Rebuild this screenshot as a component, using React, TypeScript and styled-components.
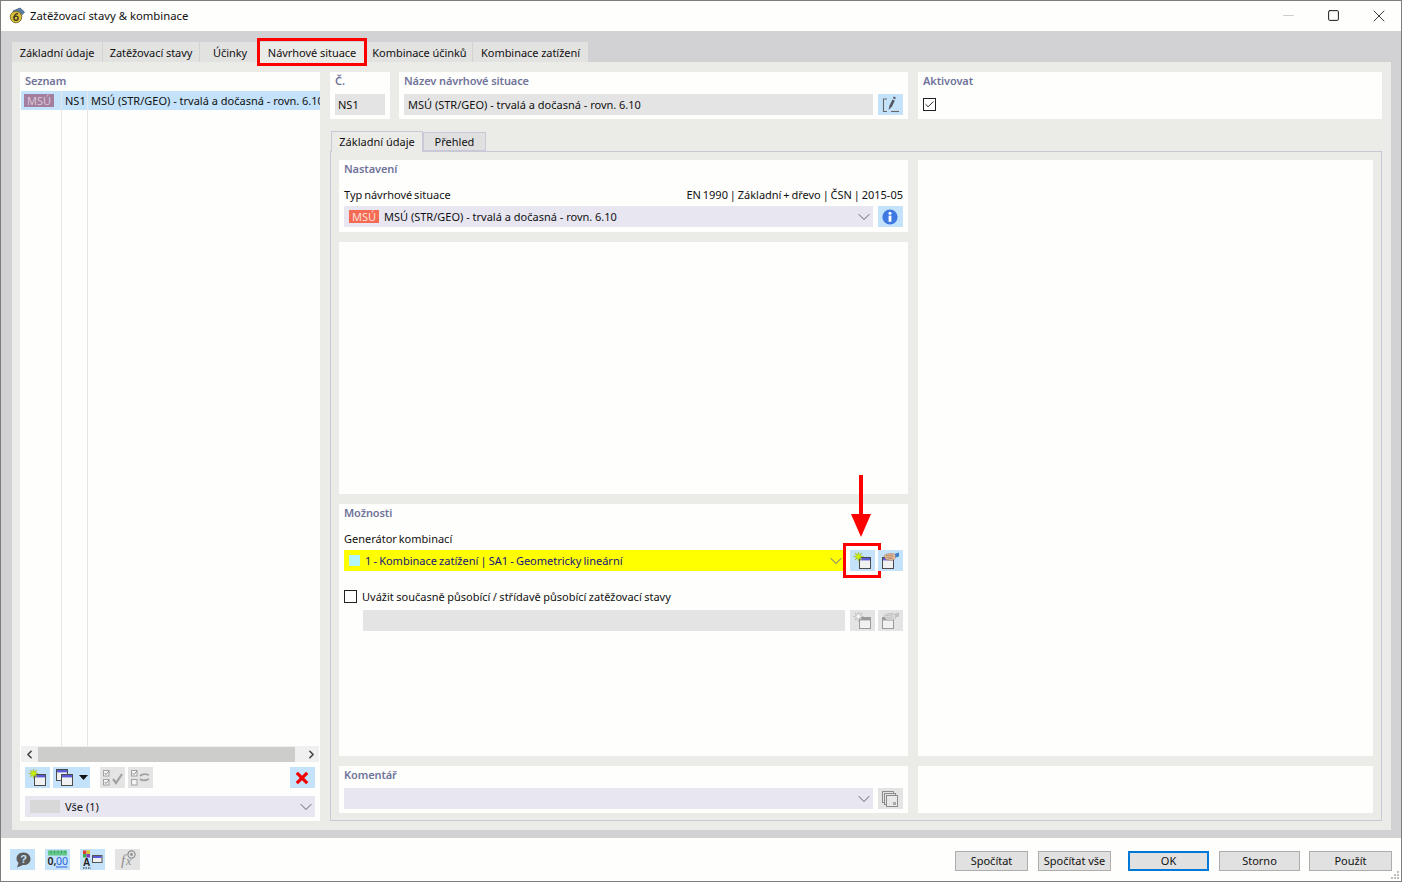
import React from 'react';
import styled, { createGlobalStyle } from 'styled-components';
import { ChevronDown, ChevronLeft, ChevronRight, X, Minus, Square, Check } from 'lucide-react';

const GlobalStyle = createGlobalStyle`
  html, body {
    margin: 0;
    padding: 0;
    background: #fff;
  }
  body {
    font-family: "Noto Sans", "Open Sans", "Liberation Sans", sans-serif;
    font-size: 11px;
    color: #111;
  }
  * {
    box-sizing: border-box;
  }
`;

const Window = styled.div`
  position: relative;
  width: 1402px;
  height: 882px;
  display: flex;
  flex-direction: column;
  border: 1px solid #7d7d7d;
  background: #fefefc;
  overflow: hidden;
`;

const TitleBar = styled.div`
  height: 30px;
  flex: none;
  display: flex;
  align-items: center;
  padding: 0 0 1px 8px;
  font-size: 11.3px;
`;

const TitleText = styled.span`
  flex: 1;
  margin-left: 5px;
`;

const WindowButton = styled.div<{ $faded?: boolean }>`
  width: 45px;
  height: 29px;
  display: flex;
  align-items: center;
  justify-content: center;
  color: ${(p) => (p.$faded ? '#c4c4c4' : '#111')};
`;

const Body = styled.div`
  flex: 1;
  min-height: 0;
  display: flex;
  flex-direction: column;
  background: #d2d2d4;
  padding: 11px 10px 8px 11px;
`;

const TabRow = styled.div`
  display: flex;
  height: 20px;
  flex: none;
`;

const Tab = styled.div<{ $w: number; $active?: boolean; $shift?: number }>`
  position: relative;
  width: ${(p) => p.$w}px;
  margin-right: 1px;
  padding-left: ${(p) => p.$shift ?? 0}px;
  display: flex;
  align-items: center;
  justify-content: center;
  white-space: nowrap;
  letter-spacing: -0.05px;
  background: ${(p) => (p.$active ? '#ebebe8' : '#e2e2e1')};
`;

const Highlight = styled.div`
  position: absolute;
  inset: -4px -1px -4px -1px;
  border: 3px solid #f00;
  pointer-events: none;
`;

const MainPanel = styled.div`
  flex: 1;
  min-height: 0;
  display: flex;
  gap: 10px;
  background: #ebebe8;
  padding: 10px 9px 9px 8px;
`;

const LeftColumn = styled.div`
  width: 300px;
  flex: none;
  display: flex;
  flex-direction: column;
  background: #fefefc;
`;

const RightColumn = styled.div`
  flex: 1;
  min-width: 0;
  display: flex;
  flex-direction: column;
`;

const PanelTitle = styled.div`
  height: 18px;
  line-height: 18px;
  font-weight: 600;
  letter-spacing: -0.1px;
  color: #70739a;
  white-space: nowrap;
`;

const ListTitle = styled(PanelTitle)`
  padding-left: 5px;
  height: 19px;
  flex: none;
`;

const ListBody = styled.div`
  flex: 1;
  min-height: 0;
  display: grid;
  grid-template-columns: 41px 26px 1fr;
  margin-left: 1px;
  overflow: hidden;
`;

const ListColumn = styled.div<{ $last?: boolean }>`
  border-right: ${(p) => (p.$last ? 'none' : '1px solid #e6e6e6')};
  min-width: 0;
`;

const ListCell = styled.div<{ $pad?: number }>`
  height: 19px;
  display: flex;
  align-items: center;
  padding-left: ${(p) => p.$pad ?? 0}px;
  background: #c4e2fa;
  white-space: nowrap;
  overflow: hidden;
`;

const Badge = styled.span<{ $dim?: boolean }>`
  display: inline-block;
  width: 30px;
  height: 13px;
  line-height: 13px;
  margin-top: ${(p) => (p.$dim ? -1 : 0)}px;
  text-align: center;
  color: ${(p) => (p.$dim ? '#d9c6d6' : '#ffe0d8')};
  background: ${(p) => (p.$dim ? '#a47e9e' : '#f46a53')};
  flex: none;
`;

const ScrollBar = styled.div`
  height: 16px;
  flex: none;
  margin: 0 1px;
  display: flex;
  align-items: center;
  background: #f0f0f0;
  color: #444;
`;

const ScrollArrow = styled.div<{ $w: number; $end?: boolean }>`
  width: ${(p) => p.$w}px;
  flex: none;
  display: flex;
  justify-content: ${(p) => (p.$end ? 'flex-end' : 'center')};
  padding-right: ${(p) => (p.$end ? 1 : 0)}px;
`;

const ScrollThumb = styled.div`
  flex: 1;
  height: 15px;
  background: #cdcdcb;
`;

const ListToolbar = styled.div`
  flex: none;
  display: flex;
  align-items: center;
  margin-top: 5px;
  padding: 0 5px;
`;

const IconButton = styled.div<{ $w?: number; $off?: boolean; $gap?: number }>`
  width: ${(p) => p.$w ?? 25}px;
  height: 21px;
  flex: none;
  margin-left: ${(p) => p.$gap ?? 0}px;
  display: flex;
  align-items: center;
  justify-content: center;
  background: ${(p) => (p.$off ? '#e4e4e4' : '#c4e2fa')};
`;

const Spacer = styled.div`
  flex: 1;
`;

const SelectBox = styled.div<{ $yellow?: boolean }>`
  flex: 1;
  min-width: 0;
  height: 21px;
  display: flex;
  align-items: center;
  gap: 5px;
  padding: 0 0 0 5px;
  background: ${(p) => (p.$yellow ? '#ffff00' : '#e7e6f1')};
  color: ${(p) => (p.$yellow ? '#14147e' : '#111')};
  word-spacing: ${(p) => (p.$yellow ? -0.7 : 0)}px;
  white-space: nowrap;
`;

const SelectText = styled.span`
  flex: 1;
`;

const Swatch = styled.span<{ $color: string; $w: number }>`
  width: ${(p) => p.$w}px;
  height: ${(p) => (p.$w > 20 ? 13 : 11)}px;
  background: ${(p) => p.$color};
  flex: none;
`;

const Chevron = styled(ChevronDown).attrs({ strokeWidth: 1.1 })<{ $blue?: boolean }>`
  width: 20px;
  height: 20px;
  flex: none;
  margin-right: -1px;
  color: ${(p) => (p.$blue ? '#4a4ac0' : '#555')};
`;

const FilterRow = styled.div`
  flex: none;
  display: flex;
  margin: 8px 5px 4px;
`;

const TopRow = styled.div`
  height: 47px;
  flex: none;
  display: flex;
  gap: 9px;
`;

const TopPanel = styled.div<{ $w?: number }>`
  width: ${(p) => (p.$w ? `${p.$w}px` : 'auto')};
  flex: ${(p) => (p.$w ? 'none' : '1')};
  margin-left: ${(p) => (p.$w ? 0 : 1)}px;
  background: #fefefc;
  padding: 0 5px;
`;

const Row = styled.div<{ $top?: number; $indent?: number }>`
  display: flex;
  align-items: center;
  margin-top: ${(p) => p.$top ?? 0}px;
  margin-left: ${(p) => p.$indent ?? 0}px;
`;

const ReadOnlyField = styled.div<{ $pad?: number }>`
  flex: 1;
  min-width: 0;
  height: 21px;
  line-height: 21px;
  padding-left: ${(p) => p.$pad ?? 3}px;
  background: #e4e4e4;
  white-space: nowrap;
`;

const CheckBox = styled.div`
  width: 13px;
  height: 13px;
  flex: none;
  display: flex;
  align-items: center;
  justify-content: center;
  border: 1px solid #222;
  background: #fff;
  color: #111;
`;

const SubTabRow = styled.div`
  height: 20px;
  flex: none;
  margin-top: 12px;
  display: flex;
  align-items: flex-end;
  padding-left: 1px;
`;

const SubTab = styled.div<{ $w: number; $active?: boolean }>`
  width: ${(p) => p.$w}px;
  height: ${(p) => (p.$active ? 21 : 19)}px;
  margin-bottom: ${(p) => (p.$active ? -1 : 0)}px;
  padding-bottom: ${(p) => (p.$active ? 2 : 1)}px;
  position: relative;
  z-index: 1;
  display: flex;
  align-items: center;
  justify-content: center;
  background: ${(p) => (p.$active ? '#ebebe8' : '#e0e0e0')};
  border: 1px solid #c8c8d6;
  border-bottom: ${(p) => (p.$active ? 'none' : '1px solid #c8c8d6')};
`;

const SubPanel = styled.div`
  flex: 1;
  min-height: 0;
  display: flex;
  gap: 10px;
  padding: 8px 8px 7px 8px;
  border: 1px solid #c8c8d6;
`;

const FormColumn = styled.div`
  width: 569px;
  flex: none;
  display: flex;
  flex-direction: column;
  gap: 10px;
`;

const SideColumn = styled.div`
  flex: 1;
  min-width: 0;
  display: flex;
  flex-direction: column;
  gap: 10px;
`;

const Panel = styled.div<{ $h?: number }>`
  height: ${(p) => (p.$h ? `${p.$h}px` : 'auto')};
  flex: ${(p) => (p.$h ? 'none' : '1')};
  position: relative;
  background: #fefefc;
  padding: 0 5px;
`;

const FieldLabel = styled.div`
  height: 18px;
  line-height: 18px;
  margin-top: 8px;
  margin-bottom: 2px;
  display: flex;
  justify-content: space-between;
  word-spacing: -1px;
  white-space: nowrap;
`;

const CheckLabel = styled.span`
  margin-left: 5px;
  line-height: 13px;
  word-spacing: -0.4px;
  white-space: nowrap;
`;

const RedFrame = styled.div`
  position: absolute;
  inset: -7px -6px -7px -7px;
  border: 3px solid #f00;
  pointer-events: none;
`;

const RedArrow = styled.svg`
  position: absolute;
  left: 1px;
  top: -75px;
  pointer-events: none;
`;

const ButtonSlot = styled.div<{ $gap?: number }>`
  position: relative;
  flex: none;
  margin-left: ${(p) => p.$gap ?? 5}px;
`;

const Footer = styled.div`
  height: 43px;
  flex: none;
  display: flex;
  align-items: center;
  padding: 0 9px;
  position: relative;
`;

const DialogButton = styled.div<{ $primary?: boolean; $w: number; $gap: number }>`
  width: ${(p) => p.$w}px;
  height: 20px;
  margin-left: ${(p) => p.$gap}px;
  margin-top: 2px;
  flex: none;
  display: flex;
  align-items: center;
  justify-content: center;
  background: #e1e1e1;
  border: ${(p) => (p.$primary ? '2px solid #0078d7' : '1px solid #adadad')};
`;

const Grip = styled.svg`
  position: absolute;
  right: 1px;
  bottom: 1px;
`;

/* icons */

const AppIcon = () => (
  <svg width="16" height="17" viewBox="0 0 16 17">
    <path d="M4 4 L11 1 L15.5 5 L12 9 L5 8 Z" fill="#5b7ea8" stroke="#34506e" strokeWidth="0.7" />
    <circle cx="7" cy="10" r="5.8" fill="#d8bf3c" stroke="#6d5f1e" strokeWidth="0.8" />
    <circle cx="7" cy="11.3" r="2.1" fill="none" stroke="#3a3418" strokeWidth="1.3" />
    <path d="M5 11 C5 8 7 6.5 9 6.6" fill="none" stroke="#3a3418" strokeWidth="1.3" />
  </svg>
);

const MiniWindow = ({ x, y, off }: { x: number; y: number; off?: boolean }) => (
  <g>
    <rect x={x + 0.5} y={y + 0.5} width="11" height="11" fill="#f1f1f1" stroke={off ? '#9c9c9c' : '#4b4b4b'} />
    <rect x={x + 1} y={y + 1} width="10" height="2.4" fill={off ? '#9a9a9a' : '#5a5ad6'} />
  </g>
);

const NewWindowIcon = ({ off }: { off?: boolean }) => (
  <svg width="21" height="18" viewBox="0 0 21 18">
    <MiniWindow x={7} y={5} off={off} />
    <path
      d="M11.5 4.5 L8.35 5.27 L10 8 L7.27 6.35 L6.5 9.5 L5.73 6.35 L3 8 L4.65 5.27 L1.5 4.5 L4.65 3.73 L3 1 L5.73 2.65 L6.5 0 L7.27 2.65 L10 1 L8.35 3.73 Z"
      fill={off ? '#f6f6f6' : '#c8f000'}
      stroke={off ? '#a9a9a9' : '#9fb23c'}
      strokeWidth="0.5"
    />
  </svg>
);

const HandWindowIcon = ({ off }: { off?: boolean }) => (
  <svg width="21" height="18" viewBox="0 0 21 18">
    <MiniWindow x={2} y={5} off={off} />
    <path
      d="M4 3.6 C6 2 9 1.4 12 1.6 L15.5 2.4 L15.5 6 C14 8 11 9 8.5 8 L6 7.6 L5 5.6 Z"
      fill={off ? '#dedede' : '#e8bf9f'}
      stroke={off ? '#a9a9a9' : '#a58268'}
      strokeWidth="0.6"
    />
    <path d="M6 3.6 L13 3 M6 5.4 L13.5 4.8 M7.5 7 L12.5 6.4" fill="none" stroke={off ? '#b5b5b5' : '#a0785e'} strokeWidth="0.7" />
    <path d="M15 1.8 L19 0.4 L19 4.4 L15.5 5.6 Z" fill={off ? '#c0c0c0' : '#3f7fc8'} />
  </svg>
);

const CopyWindowsIcon = () => (
  <svg width="21" height="18" viewBox="0 0 21 18">
    <MiniWindow x={1} y={0} />
    <MiniWindow x={6} y={5} />
  </svg>
);

const CheckAllIcon = () => (
  <svg width="21" height="18" viewBox="0 0 21 18">
    <rect x="1.5" y="1.5" width="5.5" height="5.5" fill="#f4f4f4" stroke="#a2a2a2" />
    <rect x="1.5" y="10.5" width="5.5" height="5.5" fill="#f4f4f4" stroke="#a2a2a2" />
    <path d="M2.5 4 L4 5.5 L7 2 M2.5 13 L4 14.5 L7 11" fill="none" stroke="#8e8e8e" />
    <path d="M11 10 L14 14 L20 5" fill="none" stroke="#a2a2a2" strokeWidth="2.2" />
  </svg>
);

const SwapCheckIcon = () => (
  <svg width="21" height="18" viewBox="0 0 21 18">
    <rect x="1.5" y="1.5" width="5.5" height="5.5" fill="#f4f4f4" stroke="#a2a2a2" />
    <rect x="1.5" y="10.5" width="5.5" height="5.5" fill="#f4f4f4" stroke="#a2a2a2" />
    <path d="M2.5 4 L4 5.5 L7 2" fill="none" stroke="#8e8e8e" />
    <path d="M10 7 C13 4 16 5 19 6 M10 10 C13 13 16 11 19 10" fill="none" stroke="#a2a2a2" strokeWidth="1.8" />
  </svg>
);

const DeleteIcon = () => (
  <svg width="15" height="14" viewBox="0 0 15 14">
    <path d="M1.8 1.8 L12.2 12.2 M12.2 1.8 L1.8 12.2" stroke="#f00000" strokeWidth="3.2" />
  </svg>
);

const EditIcon = () => (
  <svg width="21" height="18" viewBox="0 0 21 18">
    <path d="M7 3 H3.5 V15.5 H7" fill="none" stroke="#666" strokeWidth="1.1" />
    <path d="M11 15.5 H19" stroke="#666" strokeWidth="1.1" />
    <path d="M8.5 14 L9.5 9.5 L12.5 3.5 L14.8 4.5 L12 10.5 Z" fill="#55555f" />
    <rect x="13.2" y="1" width="2.4" height="1.8" fill="#55555f" transform="rotate(22 14.4 2)" />
  </svg>
);

const InfoIcon = () => (
  <svg width="17" height="16" viewBox="0 0 17 16">
    <circle cx="8" cy="8" r="7.6" fill="#3f78e0" />
    <circle cx="8" cy="4.2" r="1.5" fill="#fff" />
    <rect x="6.6" y="6.6" width="2.8" height="6.2" fill="#fff" />
  </svg>
);

const CopySheetsIcon = () => (
  <svg width="21" height="20" viewBox="0 0 21 20">
    <rect x="2.5" y="2.5" width="11" height="11" fill="#e4e4e4" stroke="#8b8b8b" />
    <rect x="4.5" y="4.5" width="11" height="11" fill="#e4e4e4" stroke="#8b8b8b" />
    <rect x="6.5" y="6.5" width="11" height="11" fill="#e8e8e8" stroke="#8b8b8b" />
    <rect x="13" y="13" width="3" height="3" fill="#aaa" />
  </svg>
);

const HelpIcon = () => (
  <svg width="18" height="18" viewBox="0 0 18 18">
    <path d="M9.5 1.5 C14 1.5 16.5 4.5 16.5 8 C16.5 12 13 14.5 9 14 L3 16.5 L4.5 12 C3 10.5 2.5 9.2 2.5 7.8 C2.5 4.5 5 1.5 9.5 1.5 Z" fill="#5c5c5c" />
    <text x="9.5" y="12" textAnchor="middle" fontSize="11" fontWeight="700" fontFamily="Liberation Sans, sans-serif" fill="#c4e2fa">?</text>
  </svg>
);

const UnitsIcon = () => (
  <svg width="21" height="19" viewBox="0 0 21 19">
    <rect x="1" y="0.5" width="19" height="5" fill="#63c78a" />
    <path d="M4 0.5 V3 M7.5 0.5 V3 M11 0.5 V3 M14.5 0.5 V3 M18 0.5 V3" stroke="#3d9b62" />
    <text x="0.5" y="15" fontSize="10.5" fontFamily="Noto Sans, sans-serif" fontWeight="600" fill="#222">0,</text>
    <text x="9" y="15" fontSize="10.5" fontFamily="Noto Sans, sans-serif" fill="#2a62d8">00</text>
    <path d="M9 17 H20.5" stroke="#2a62d8" />
  </svg>
);

const PaletteIcon = () => (
  <svg width="21" height="19" viewBox="0 0 21 19">
    <rect x="1" y="0.5" width="3.5" height="3.5" fill="#e23b3b" />
    <rect x="4.5" y="0.5" width="3.5" height="3.5" fill="#d8c82e" />
    <rect x="1" y="4" width="3.5" height="3.5" fill="#3bb04a" />
    <rect x="4.5" y="4" width="3.5" height="3.5" fill="#8b3bc0" />
    <text x="1" y="15.5" fontSize="10" fontWeight="700" fontFamily="Liberation Sans, sans-serif" fill="#222">A</text>
    <path d="M1 18 H9" stroke="#222" strokeDasharray="1.5 1" />
    <rect x="10.5" y="5.5" width="9.5" height="7" fill="#f1f1f1" stroke="#555" />
    <rect x="11" y="6" width="8.5" height="2" fill="#5a5ad6" />
  </svg>
);

const FormulaIcon = () => (
  <svg width="21" height="19" viewBox="0 0 21 19">
    <text x="4" y="15" fontSize="15" fontStyle="italic" fontFamily="Liberation Serif, serif" fill="#8f8f8f">f</text>
    <text x="9" y="15" fontSize="12" fontStyle="italic" fontFamily="Liberation Serif, serif" fill="#8f8f8f">x</text>
    <circle cx="14.5" cy="4.5" r="3.6" fill="none" stroke="#8f8f8f" strokeWidth="1.2" />
    <circle cx="14.5" cy="4.5" r="1.4" fill="#8f8f8f" />
  </svg>
);

const Triangle = () => (
  <svg width="9" height="5" viewBox="0 0 9 5" style={{ marginLeft: 3 }}>
    <path d="M0 0 H9 L4.5 5 Z" fill="#111" />
  </svg>
);

export default function App() {
  return (
    <>
      <GlobalStyle />
      <Window>
        <TitleBar>
          <AppIcon />
          <TitleText>Zatěžovací stavy &amp; kombinace</TitleText>
          <WindowButton $faded>
            <Minus size={17} strokeWidth={1.2} />
          </WindowButton>
          <WindowButton>
            <Square size={13} strokeWidth={1.8} />
          </WindowButton>
          <WindowButton>
            <X size={20} strokeWidth={1} />
          </WindowButton>
        </TitleBar>

        <Body>
          <TabRow>
            <Tab $w={90}>Základní údaje</Tab>
            <Tab $w={96}>Zatěžovací stavy</Tab>
            <Tab $w={57} $shift={3}>
              Účinky
            </Tab>
            <Tab $w={108} $active>
              Návrhové situace
              <Highlight />
            </Tab>
            <Tab $w={105}>Kombinace účinků</Tab>
            <Tab $w={115}>Kombinace zatížení</Tab>
          </TabRow>

          <MainPanel>
            <LeftColumn>
              <ListTitle>Seznam</ListTitle>
              <ListBody>
                <ListColumn>
                  <ListCell $pad={3}>
                    <Badge $dim>MSÚ</Badge>
                  </ListCell>
                </ListColumn>
                <ListColumn>
                  <ListCell $pad={3}>NS1</ListCell>
                </ListColumn>
                <ListColumn $last>
                  <ListCell $pad={3}>MSÚ (STR/GEO) - trvalá a dočasná - rovn. 6.10</ListCell>
                </ListColumn>
              </ListBody>
              <ScrollBar>
                <ScrollArrow $w={17}>
                  <ChevronLeft size={13} strokeWidth={3} />
                </ScrollArrow>
                <ScrollThumb />
                <ScrollArrow $w={24} $end>
                  <ChevronRight size={13} strokeWidth={3} />
                </ScrollArrow>
              </ScrollBar>
              <ListToolbar>
                <IconButton>
                  <NewWindowIcon />
                </IconButton>
                <IconButton $w={37} $gap={3}>
                  <CopyWindowsIcon />
                  <Triangle />
                </IconButton>
                <IconButton $off $gap={10}>
                  <CheckAllIcon />
                </IconButton>
                <IconButton $off $gap={3}>
                  <SwapCheckIcon />
                </IconButton>
                <Spacer />
                <IconButton>
                  <DeleteIcon />
                </IconButton>
              </ListToolbar>
              <FilterRow>
                <SelectBox>
                  <Swatch $color="#d8d8d8" $w={30} />
                  <SelectText>Vše (1)</SelectText>
                  <Chevron />
                </SelectBox>
              </FilterRow>
            </LeftColumn>

            <RightColumn>
              <TopRow>
                <TopPanel $w={60}>
                  <PanelTitle>Č.</PanelTitle>
                  <Row $top={4}>
                    <ReadOnlyField>NS1</ReadOnlyField>
                  </Row>
                </TopPanel>
                <TopPanel $w={509}>
                  <PanelTitle>Název návrhové situace</PanelTitle>
                  <Row $top={4}>
                    <ReadOnlyField $pad={4}>MSÚ (STR/GEO) - trvalá a dočasná - rovn. 6.10</ReadOnlyField>
                    <ButtonSlot>
                      <IconButton>
                        <EditIcon />
                      </IconButton>
                    </ButtonSlot>
                  </Row>
                </TopPanel>
                <TopPanel>
                  <PanelTitle>Aktivovat</PanelTitle>
                  <Row $top={8}>
                    <CheckBox>
                      <Check size={11} strokeWidth={2} />
                    </CheckBox>
                  </Row>
                </TopPanel>
              </TopRow>

              <SubTabRow>
                <SubTab $w={92} $active>
                  Základní údaje
                </SubTab>
                <SubTab $w={63}>Přehled</SubTab>
              </SubTabRow>

              <SubPanel>
                <FormColumn>
                  <Panel $h={72}>
                    <PanelTitle>Nastavení</PanelTitle>
                    <FieldLabel>
                      <span>Typ návrhové situace</span>
                      <span>EN 1990 | Základní + dřevo | ČSN | 2015-05</span>
                    </FieldLabel>
                    <Row>
                      <SelectBox>
                        <Badge>MSÚ</Badge>
                        <SelectText>MSÚ (STR/GEO) - trvalá a dočasná - rovn. 6.10</SelectText>
                        <Chevron />
                      </SelectBox>
                      <ButtonSlot>
                        <IconButton>
                          <InfoIcon />
                        </IconButton>
                      </ButtonSlot>
                    </Row>
                  </Panel>
                  <Panel $h={252} />
                  <Panel $h={252}>
                    <PanelTitle>Možnosti</PanelTitle>
                    <FieldLabel>Generátor kombinací</FieldLabel>
                    <Row>
                      <SelectBox $yellow>
                        <Swatch $color="#b4f6ff" $w={11} />
                        <SelectText>1 - Kombinace zatížení | SA1 - Geometricky lineární</SelectText>
                        <Chevron $blue />
                      </SelectBox>
                      <ButtonSlot>
                        <IconButton>
                          <NewWindowIcon />
                        </IconButton>
                        <RedFrame />
                        <RedArrow width="20" height="63" viewBox="0 0 20 63">
                          <path d="M8 0 H12 V39 H20 L10 62 L0 39 H8 Z" fill="#f00" />
                        </RedArrow>
                      </ButtonSlot>
                      <ButtonSlot $gap={3}>
                        <IconButton>
                          <HandWindowIcon />
                        </IconButton>
                      </ButtonSlot>
                    </Row>
                    <Row $top={19}>
                      <CheckBox />
                      <CheckLabel>Uvážit současně působící / střídavě působící zatěžovací stavy</CheckLabel>
                    </Row>
                    <Row $top={7} $indent={19}>
                      <ReadOnlyField />
                      <ButtonSlot>
                        <IconButton $off>
                          <NewWindowIcon off />
                        </IconButton>
                      </ButtonSlot>
                      <ButtonSlot $gap={3}>
                        <IconButton $off>
                          <HandWindowIcon off />
                        </IconButton>
                      </ButtonSlot>
                    </Row>
                  </Panel>
                  <Panel>
                    <PanelTitle>Komentář</PanelTitle>
                    <Row $top={4}>
                      <SelectBox>
                        <SelectText />
                        <Chevron />
                      </SelectBox>
                      <ButtonSlot>
                        <IconButton $off>
                          <CopySheetsIcon />
                        </IconButton>
                      </ButtonSlot>
                    </Row>
                  </Panel>
                </FormColumn>
                <SideColumn>
                  <Panel />
                  <Panel $h={47} />
                </SideColumn>
              </SubPanel>
            </RightColumn>
          </MainPanel>
        </Body>

        <Footer>
          <IconButton>
            <HelpIcon />
          </IconButton>
          <IconButton $gap={10}>
            <UnitsIcon />
          </IconButton>
          <IconButton $gap={10}>
            <PaletteIcon />
          </IconButton>
          <IconButton $off $gap={10}>
            <FormulaIcon />
          </IconButton>
          <Spacer />
          <DialogButton $w={73} $gap={0}>Spočítat</DialogButton>
          <DialogButton $w={73} $gap={10}>Spočítat vše</DialogButton>
          <DialogButton $w={81} $gap={17} $primary>OK</DialogButton>
          <DialogButton $w={81} $gap={10}>Storno</DialogButton>
          <DialogButton $w={83} $gap={9}>Použít</DialogButton>
          <Grip width="10" height="10" viewBox="0 0 10 10">
            <path d="M7 1 h2 v2 h-2 z M4 4 h2 v2 h-2 z M7 4 h2 v2 h-2 z M1 7 h2 v2 h-2 z M4 7 h2 v2 h-2 z M7 7 h2 v2 h-2 z" fill="#bdbdbd" />
          </Grip>
        </Footer>
      </Window>
    </>
  );
}
